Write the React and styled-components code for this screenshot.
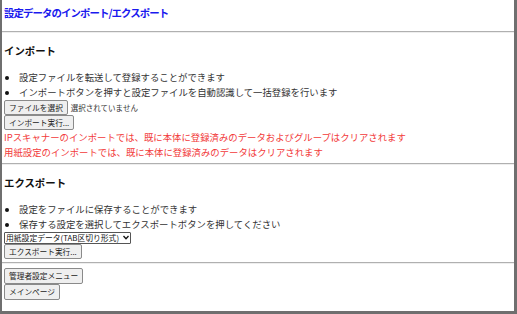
import React from "react";
import styled, { createGlobalStyle } from "styled-components";

const GlobalStyle = createGlobalStyle`
  html, body {
    margin: 0;
    padding: 0;
    background: #ffffff;
  }
  body {
    font-family: "Noto Sans CJK JP", "Liberation Sans", sans-serif;
    color: #222222;
  }
`;

const Frame = styled.div`
  box-sizing: border-box;
  width: 517px;
  height: 314px;
  border-left: 2px solid #6f6f6f;
  border-right: 3px solid #6f6f6f;
  border-bottom: 3px solid #6f6f6f;
  padding: 6px 0 0 1px;
  overflow: hidden;
`;

const Title = styled.div`
  font-size: 10.4px;
  letter-spacing: -0.9px;
  line-height: 14px;
  font-weight: bold;
  color: #1a1aee;
  padding-left: 1px;
`;

const Rule = styled.hr`
  margin: ${({ top = 3 }) => top}px 0 0 -1px;
  border: none;
  border-top: 1px solid #b0b0b0;
  border-bottom: 1px solid #eeeeee;
  height: 0;
`;

const Heading = styled.h3`
  margin: 10px 0 0 1px;
  font-size: 10.4px;
  line-height: 16px;
  font-weight: bold;
  color: #111111;
`;

const List = styled.ul`
  margin: 11px 0 0;
  padding: 0;
  list-style: none;
`;

const Item = styled.li`
  position: relative;
  padding-left: 16px;
  font-size: 9.4px;
  line-height: 15px;
  color: #333333;

  &::before {
    content: "";
    position: absolute;
    left: 2px;
    top: 6px;
    width: 4px;
    height: 4px;
    border-radius: 50%;
    background: #111111;
  }
`;

const Row = styled.div`
  display: flex;
  align-items: center;
  gap: 3px;
  height: ${({ h = 15 }) => h}px;
`;

const Button = styled.button`
  box-sizing: border-box;
  height: ${({ h = 15 }) => h}px;
  margin: 0 0 0 1px;
  padding: 0 4px;
  font-family: "Noto Sans CJK JP", "Liberation Sans", sans-serif;
  font-size: 7.7px;
  line-height: 10px;
  color: #222222;
  background: #efefef;
  border: 1px solid #8a8a8a;
  border-radius: 2px;
  display: block;
`;

const Hint = styled.span`
  font-size: 7.5px;
  color: #333333;
`;

const Warning = styled.div`
  font-size: 9.4px;
  line-height: 15px;
  color: #f23a3a;
  padding-left: 1px;
`;

const SelectWrap = styled.div`
  position: relative;
  display: flex;
  width: fit-content;
  margin-left: 1px;
  height: 12px;
`;

const Select = styled.select`
  box-sizing: border-box;
  appearance: none;
  height: 12px;
  margin: 0;
  padding: 0 10px 0 1px;
  font-family: "Noto Sans CJK JP", "Liberation Sans", sans-serif;
  font-size: 7.8px;
  line-height: 10px;
  color: #111111;
  border: 1px solid #555555;
  border-radius: 1px;
  background: #ffffff;
  display: block;
`;

const Chevron = styled.svg`
  position: absolute;
  right: 2px;
  top: 3px;
  width: 6px;
  height: 5px;
  pointer-events: none;
`;

const Stack = styled.div`
  display: flex;
  flex-direction: column;
  align-items: flex-start;
  margin-top: ${({ top = 0 }) => top}px;
`;

export default function App() {
  return (
    <>
      <GlobalStyle />
      <Frame>
        <Title>設定データのインポート/エクスポート</Title>
        <Rule top={11} />
        <Heading>インポート</Heading>
        <List>
          <Item>設定ファイルを転送して登録することができます</Item>
          <Item>インポートボタンを押すと設定ファイルを自動認識して一括登録を行います</Item>
        </List>
        <Row>
          <Button>ファイルを選択</Button>
          <Hint>選択されていません</Hint>
        </Row>
        <Row>
          <Button>インポート実行...</Button>
        </Row>
        <Warning>IPスキャナーのインポートでは、既に本体に登録済みのデータおよびグループはクリアされます</Warning>
        <Warning>用紙設定のインポートでは、既に本体に登録済みのデータはクリアされます</Warning>
        <Rule top={3} />
        <Heading>エクスポート</Heading>
        <List>
          <Item>設定をファイルに保存することができます</Item>
          <Item>保存する設定を選択してエクスポートボタンを押してください</Item>
        </List>
        <SelectWrap>
          <Select defaultValue="paper">
            <option value="paper">用紙設定データ(TAB区切り形式)</option>
          </Select>
          <Chevron viewBox="0 0 6 5">
            <path d="M0.5 1 L3 3.8 L5.5 1" fill="none" stroke="#111" strokeWidth="1.3" />
          </Chevron>
        </SelectWrap>
        <Row>
          <Button>エクスポート実行...</Button>
        </Row>
        <Rule top={3} />
        <Stack top={4}>
          <Button h={16}>管理者設定メニュー</Button>
          <Button h={16}>メインページ</Button>
        </Stack>
      </Frame>
    </>
  );
}
